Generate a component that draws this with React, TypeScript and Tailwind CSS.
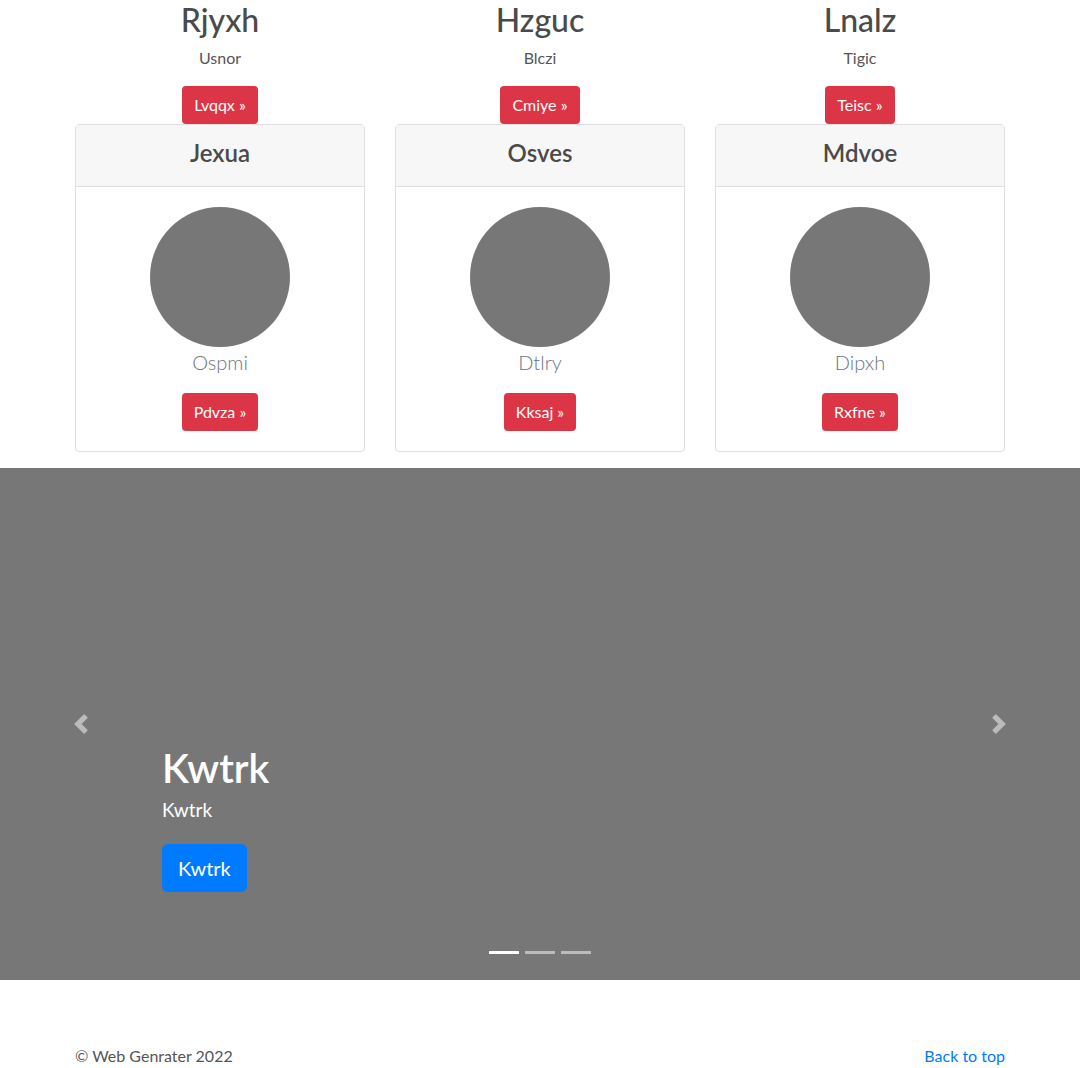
import React from "react";

const tops = [
  { h: "Rjyxh", p: "Usnor", b: "Lvqqx" },
  { h: "Hzguc", p: "Blczi", b: "Cmiye" },
  { h: "Lnalz", p: "Tigic", b: "Teisc" },
];
const cards = [
  { h: "Jexua", t: "Ospmi", b: "Pdvza" },
  { h: "Osves", t: "Dtlry", b: "Kksaj" },
  { h: "Mdvoe", t: "Dipxh", b: "Rxfne" },
];

export default function App() {
  return (
    <div
      className="bg-white text-[#555] min-h-[1068px]"
      style={{ fontFamily: "Lato, 'Noto Sans', sans-serif" }}
    >
      <div className="mx-auto w-[930px]">
        <div className="grid grid-cols-3 gap-x-[30px]">
          {tops.map((t) => (
            <div key={t.h} className="flex flex-col items-center">
              <h2 className="text-[32px] leading-[1.2] font-medium mb-2 pt-px text-[#4a4a4a]">{t.h}</h2>
              <p className="text-[16px] leading-6 mb-4 -mt-px text-[#555]">{t.p}</p>
              <button className="h-[38px] px-3 rounded-[4px] bg-[#dc3545] text-white text-[16px] leading-6">
                {t.b} »
              </button>
            </div>
          ))}
        </div>
        <div className="grid grid-cols-3 gap-x-[30px] mb-4">
          {cards.map((c) => (
            <div key={c.h} className="h-[328px] border border-[#dfdfdf] rounded-[4px] flex flex-col">
              <div className="h-[62px] shrink-0 bg-[#f7f7f7] border-b border-[#dfdfdf] px-5 pt-[13px] text-center">
                <h3 className="text-[24px] leading-[29px] font-semibold text-[#4a4a4a]">{c.h}</h3>
              </div>
              <div className="px-5 pt-5 flex flex-col items-center">
                <div className="w-[140px] h-[140px] rounded-full bg-[#777]" />
                <p className="text-[20px] leading-[30px] font-light text-[#6c757d] mb-[16px]">{c.t}</p>
                <button className="h-[38px] px-3 rounded-[4px] bg-[#dc3545] text-white text-[16px] leading-6">
                  {c.b} »
                </button>
              </div>
            </div>
          ))}
        </div>
      </div>

      <div className="relative h-[512px] bg-[#777] flex flex-col justify-end pl-[162px] pb-[88px]">
        <div className="text-white">
          <h1 className="text-[40px] leading-[1.2] font-semibold mb-1">Kwtrk</h1>
          <p className="text-[19px] leading-[28px] mt-[2px] mb-[20px]">Kwtrk</p>
          <button className="h-[48px] px-4 rounded-[6px] bg-[#007bff] text-white text-[20px] leading-[30px]">
            Kwtrk
          </button>
        </div>
        <div className="absolute left-0 top-0 h-full w-[162px] flex items-center justify-center opacity-50">
          <svg width="20" height="20" viewBox="0 0 8 8" fill="#fff">
            <path d="M5.25 0l-4 4 4 4 1.5-1.5L4.25 4l2.5-2.5L5.25 0z" />
          </svg>
        </div>
        <div className="absolute right-0 top-0 h-full w-[162px] flex items-center justify-center opacity-50">
          <svg width="20" height="20" viewBox="0 0 8 8" fill="#fff">
            <path d="M2.75 0l-1.5 1.5L3.75 4l-2.5 2.5L2.75 8l4-4-4-4z" />
          </svg>
        </div>
        <div className="absolute left-0 right-0 bottom-[26px] flex justify-center gap-[6px]">
          <span className="w-[30px] h-[3px] bg-white" />
          <span className="w-[30px] h-[3px] bg-white opacity-50" />
          <span className="w-[30px] h-[3px] bg-white opacity-50" />
        </div>
      </div>

      <footer className="mx-auto w-[930px] mt-16 flex justify-between text-[16px] leading-6">
        <p className="text-[#555]">© Web Genrater 2022</p>
        <a className="text-[#007bff]" href="#">Back to top</a>
      </footer>
    </div>
  );
}
